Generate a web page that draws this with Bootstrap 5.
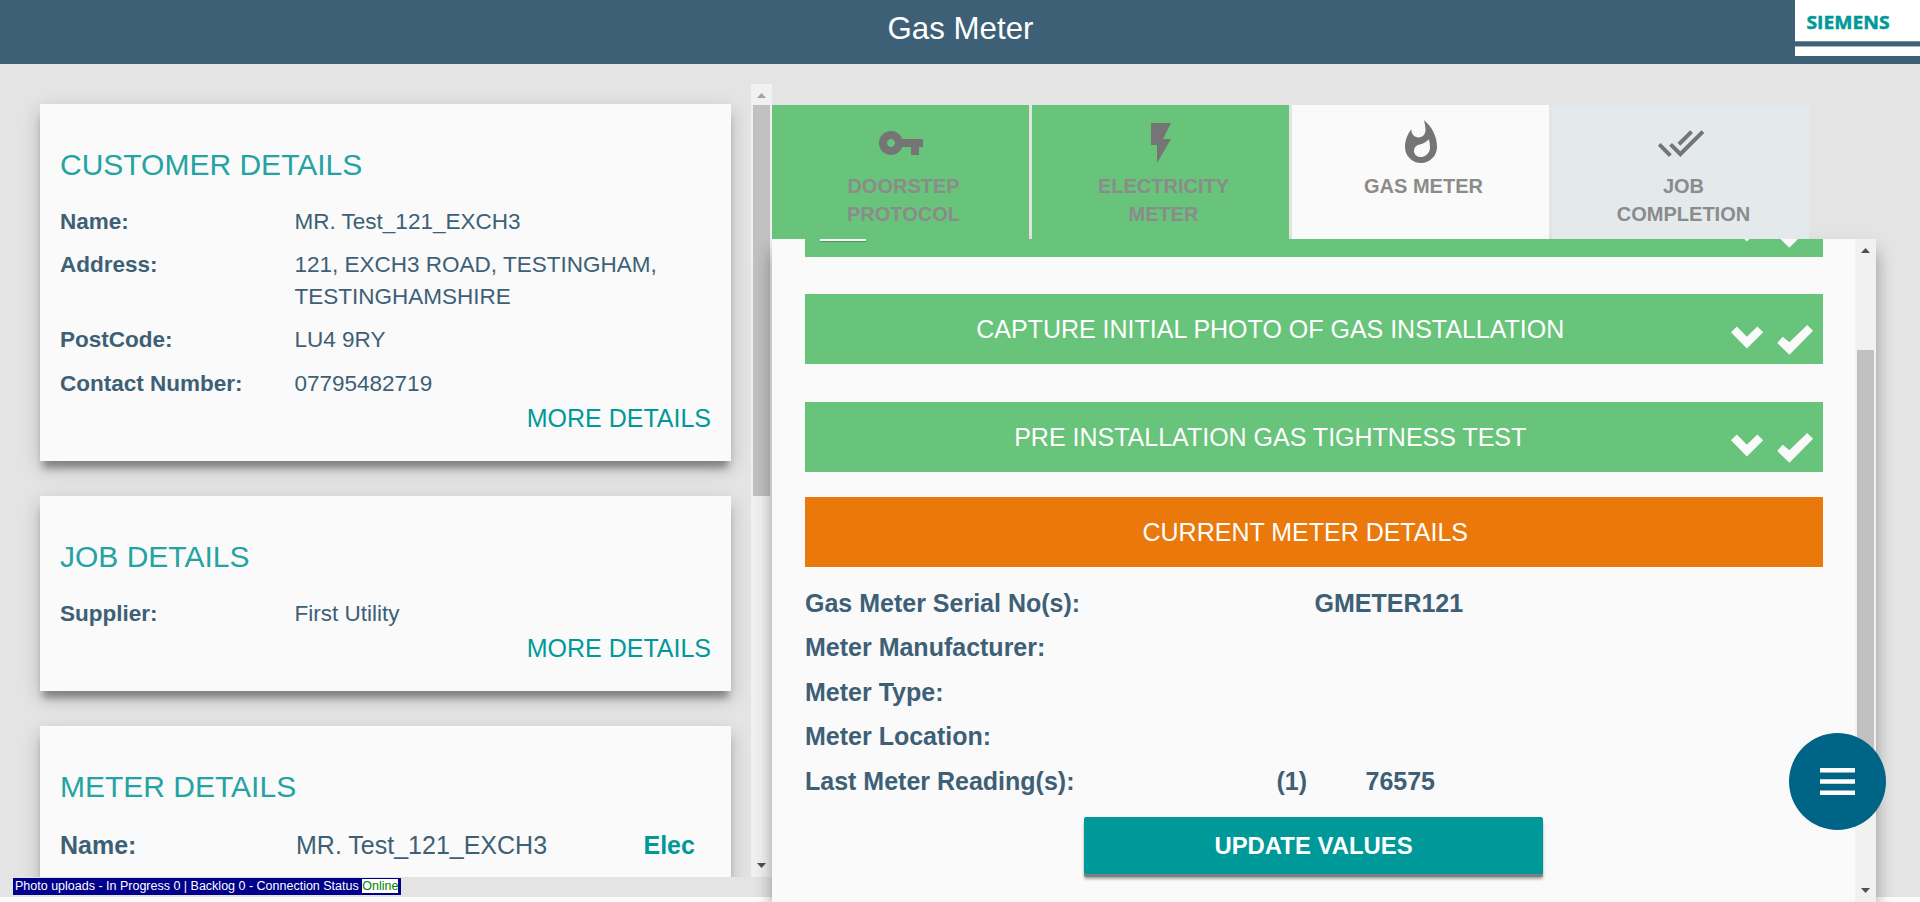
<!DOCTYPE html>
<html lang="en">
<head>
<meta charset="utf-8">
<title>Gas Meter</title>
<meta name="viewport" content="width=device-width, initial-scale=1">
<link href="https://cdn.jsdelivr.net/npm/bootstrap@5.3.0/dist/css/bootstrap.min.css" rel="stylesheet">
<style>
:root { --slate:#3d6076; --teal:#009999; --done:#68c47a; --paper:#fafafa; --page:#e4e4e4; }
body { font-family:"Liberation Sans",Arial,sans-serif; color:var(--slate); background:#fff; height:902px; overflow:hidden; }
.app { height:897px; background:var(--page); }
.topbar { height:64px; background:var(--slate); color:#fff; }
.page-title { font-size:31.25px; line-height:36px; padding:11px 0 0 1px; }
.brand { width:125px; height:56px; right:0; top:0; }
.left-pane { width:772px; height:793px; margin-top:20px; }
.left-scroll { width:751px; padding:20px 20px 0 40px; }
.raised { background:var(--paper); box-shadow:0 10px 7px -3px rgba(0,0,0,.32), 0 7px 18px 0 rgba(0,0,0,.21); }
.info { height:357px; margin-bottom:35px; padding:43px 20px 0; font-size:22.5px; line-height:32px; }
.info.job { height:195px; }
.info h2 { font-size:30px; line-height:36px; margin:0 0 23px; color:#23a3a3; font-weight:400; }
.info dl { margin:0; display:grid; grid-template-columns:234.5px 1fr; row-gap:11.2px; }
.info dt { font-weight:700; }
.info dd { margin:0; }
.info .more { color:var(--teal); font-size:25px; line-height:36px; text-decoration:none; }
.info .meter { font-size:25px; line-height:34px; margin-top:3px; grid-template-columns:236px 347.500px 1fr; }
.sbar { width:21px; background:#f1f1f1; }
.sbar .up, .sbar .down { height:21px; }
.sbar .thumb { width:17px; margin:0 2px; background:#c1c1c1; }
.right-pane { width:1104px; }
.tab { width:257px; height:134px; padding:14px 0 0; background:var(--done); color:#8b8b8b; font-weight:700; font-size:20px; line-height:28px; text-align:center; }
.tab svg { width:48px; height:48px; fill:#757575; display:block; margin:0 auto 5px; }
.tab span { display:block; padding-left:6px; }
.tab.current { background:var(--paper); }
.tab.pending { background:#e4eaec; }
.panel { height:663px; background:var(--paper); box-shadow:0 14px 14px 0 rgba(0,0,0,.26), 0 10px 20px 2px rgba(0,0,0,.10); }
.panel-body { width:1083px; padding:0 32px 0 33px; }
.step { height:70px; background:var(--done); color:#fff; font-size:25px; line-height:70px; padding-right:87.500px; text-align:center; }
.step.active { background:#eb780b; padding-right:17.500px; }
.step svg { width:84px; height:34px; right:9px; top:29px; fill:#fafafa; }
.step.first { margin-top:-52px; }
.dash { left:15px; bottom:16px; width:46px; height:4px; background:#fff; box-shadow:0 1px 1px rgba(0,0,0,.25); }
.readings { font-size:25px; font-weight:700; line-height:30px; margin-top:20.700px; display:grid; grid-auto-rows:44.5px; grid-template-columns:471.500px 38px 51px 1fr; }
.btn-update { width:459px; height:57px; background:var(--teal); color:#fff; font-weight:700; font-size:23.9px; border:0; border-radius:2px; box-shadow:0 3px 0 #808080, 0 5px 3px rgba(0,0,0,.35); padding:0; line-height:57px; }
.btn-update:hover { background:var(--teal); color:#fff; }
.fab { width:97px; height:97px; right:34.5px; top:732.5px; background:#006487; }
.fab svg { width:35px; height:27px; }
.status { left:13px; top:878px; height:17px; padding:0 3px 0 2px; background:#00008b; color:#fff; font-size:12.5px; line-height:16px; }
.status b { font-weight:400; color:#008000; background:#fff; display:inline-block; height:14px; line-height:14px; }
</style>
</head>
<body>
<div class="app position-relative">
  <header class="topbar text-center position-relative">
    <div class="page-title">Gas Meter</div>
    <svg class="brand position-absolute" viewBox="0 0 125 56">
      <rect width="125" height="56" fill="#fff"/>
      <rect y="41" width="125" height="6" fill="#a9b8c2"/>
      <rect y="41.5" width="125" height="4.5" fill="#3d6076"/>
      <text x="11.5" y="28.5" font-family="Open Sans" font-weight="700" font-size="18" textLength="83" lengthAdjust="spacingAndGlyphs" fill="#009999" stroke="#009999" stroke-width=".5">SIEMENS</text>
    </svg>
  </header>

  <div class="d-flex align-items-start">
    <aside class="left-pane d-flex overflow-hidden">
      <div class="left-scroll">
        <section class="info raised">
          <h2>CUSTOMER DETAILS</h2>
          <dl>
            <dt>Name:</dt><dd>MR. Test_121_EXCH3</dd>
            <dt>Address:</dt><dd>121, EXCH3 ROAD, TESTINGHAM, TESTINGHAMSHIRE</dd>
            <dt>PostCode:</dt><dd>LU4 9RY</dd>
            <dt>Contact Number:</dt><dd>07795482719</dd>
          </dl>
          <a class="more d-block text-end">MORE DETAILS</a>
        </section>
        <section class="info raised job">
          <h2>JOB DETAILS</h2>
          <dl><dt>Supplier:</dt><dd>First Utility</dd></dl>
          <a class="more d-block text-end">MORE DETAILS</a>
        </section>
        <section class="info raised">
          <h2>METER DETAILS</h2>
          <dl class="meter"><dt>Name:</dt><dd>MR. Test_121_EXCH3</dd><dd class="fw-bold" style="color:var(--teal)">Elec</dd></dl>
        </section>
      </div>
      <div class="sbar d-flex flex-column">
        <svg class="up" viewBox="0 0 21 21"><path d="M6 14h9L10.500 9z" fill="#a3a3a3"/></svg>
        <div class="thumb" style="height:391px"></div>
        <svg class="down mt-auto" viewBox="0 0 21 21"><path d="M6 7h9l-4.500 5z" fill="#505050"/></svg>
      </div>
    </aside>

    <main class="right-pane">
      <nav class="d-flex" style="gap:3px;padding-top:41px">
        <div class="tab">
          <svg viewBox="0 0 24 24"><path d="M12.650 10C11.830 7.670 9.610 6 7 6c-3.310 0-6 2.690-6 6s2.690 6 6 6c2.610 0 4.830-1.670 5.650-4H17v4h4v-4h2v-4H12.650zM7 14c-1.100 0-2-.9-2-2s.9-2 2-2 2 .9 2 2-.9 2-2 2z"/></svg>
          <span>DOORSTEP<br>PROTOCOL</span>
        </div>
        <div class="tab">
          <svg viewBox="0 0 24 24"><path d="M7 2v11h3v9l7-12h-4l4-8z"/></svg>
          <span>ELECTRICITY<br>METER</span>
        </div>
        <div class="tab current">
          <svg viewBox="0 0 24 24"><path d="M13.500.67s.74 2.650.74 4.800c0 2.060-1.350 3.730-3.410 3.730-2.070 0-3.630-1.670-3.630-3.730l.03-.36C5.210 7.510 4 10.620 4 14c0 4.420 3.580 8 8 8s8-3.580 8-8C20 8.610 17.410 3.800 13.500.67zM11.710 19c-1.780 0-3.220-1.400-3.220-3.140 0-1.620 1.050-2.760 2.810-3.120 1.770-.36 3.600-1.210 4.620-2.580.39 1.290.59 2.650.59 4.040 0 2.650-2.150 4.800-4.800 4.800z"/></svg>
          <span>GAS METER</span>
        </div>
        <div class="tab pending">
          <svg viewBox="0 0 24 24"><path d="M18 7l-1.410-1.410-6.340 6.340 1.410 1.410L18 7zm4.240-1.410L11.660 16.170 7.480 12l-1.410 1.410L11.660 19l12-12-1.420-1.410zM.41 13.410L6 19l1.410-1.410L1.830 12 .41 13.410z"/></svg>
          <span>JOB<br>COMPLETION</span>
        </div>
      </nav>
      <div class="panel d-flex">
        <div class="panel-body overflow-hidden">
          <div class="step first position-relative"><i class="dash position-absolute"></i>
            <svg class="position-absolute" viewBox="0 0 84 34"><path d="M1 9.200l5.900-5.700 10 10.300L27.300 3.500l5.900 5.700L16.900 25.500zM47.200 20l5.500-6.300 6.700 5.600L77.200 2l5.900 5.700-23.700 24z"/></svg></div>
          <div class="step position-relative" style="margin-top:37px">CAPTURE INITIAL PHOTO OF GAS INSTALLATION
            <svg class="position-absolute" viewBox="0 0 84 34"><path d="M1 9.200l5.900-5.700 10 10.300L27.300 3.500l5.900 5.700L16.900 25.500zM47.200 20l5.500-6.300 6.700 5.600L77.200 2l5.900 5.700-23.700 24z"/></svg></div>
          <div class="step position-relative" style="margin-top:38px">PRE INSTALLATION GAS TIGHTNESS TEST
            <svg class="position-absolute" viewBox="0 0 84 34"><path d="M1 9.200l5.900-5.700 10 10.300L27.300 3.500l5.900 5.700L16.900 25.500zM47.200 20l5.500-6.300 6.700 5.600L77.200 2l5.900 5.700-23.700 24z"/></svg></div>
          <div class="step active" style="margin-top:25px">CURRENT METER DETAILS</div>
          <div class="readings">
            <div>Gas Meter Serial No(s):</div><div></div><div>GMETER121</div><div></div>
            <div>Meter Manufacturer:</div><div></div><div></div><div></div>
            <div>Meter Type:</div><div></div><div></div><div></div>
            <div>Meter Location:</div><div></div><div></div><div></div>
            <div>Last Meter Reading(s):</div><div>(1)</div><div></div><div>76575</div>
          </div>
          <div class="text-center" style="margin-top:6.800px;padding-right:1px"><button class="btn btn-update">UPDATE VALUES</button></div>
        </div>
        <div class="sbar d-flex flex-column">
          <svg class="up" viewBox="0 0 21 21"><path d="M6 14h9L10.500 9z" fill="#505050"/></svg>
          <div class="thumb" style="height:430px;margin-top:90px"></div>
          <svg class="down mt-auto" viewBox="0 0 21 21"><path d="M6 7h9l-4.500 5z" fill="#505050"/></svg>
        </div>
      </div>
    </main>
  </div>

  <div class="fab position-absolute rounded-circle d-flex align-items-center justify-content-center">
    <svg viewBox="0 0 35 27"><path d="M0 0h35v4.500H0zM0 11.200h35v4.500H0zM0 22.400h35v4.500H0z" fill="#fff"/></svg>
  </div>
  <div class="status position-absolute text-nowrap">Photo uploads - In Progress 0 | Backlog 0 - Connection Status <b>Online</b></div>
</div>
<script src="https://cdn.jsdelivr.net/npm/bootstrap@5.3.0/dist/js/bootstrap.bundle.min.js"></script>
</body>
</html>
